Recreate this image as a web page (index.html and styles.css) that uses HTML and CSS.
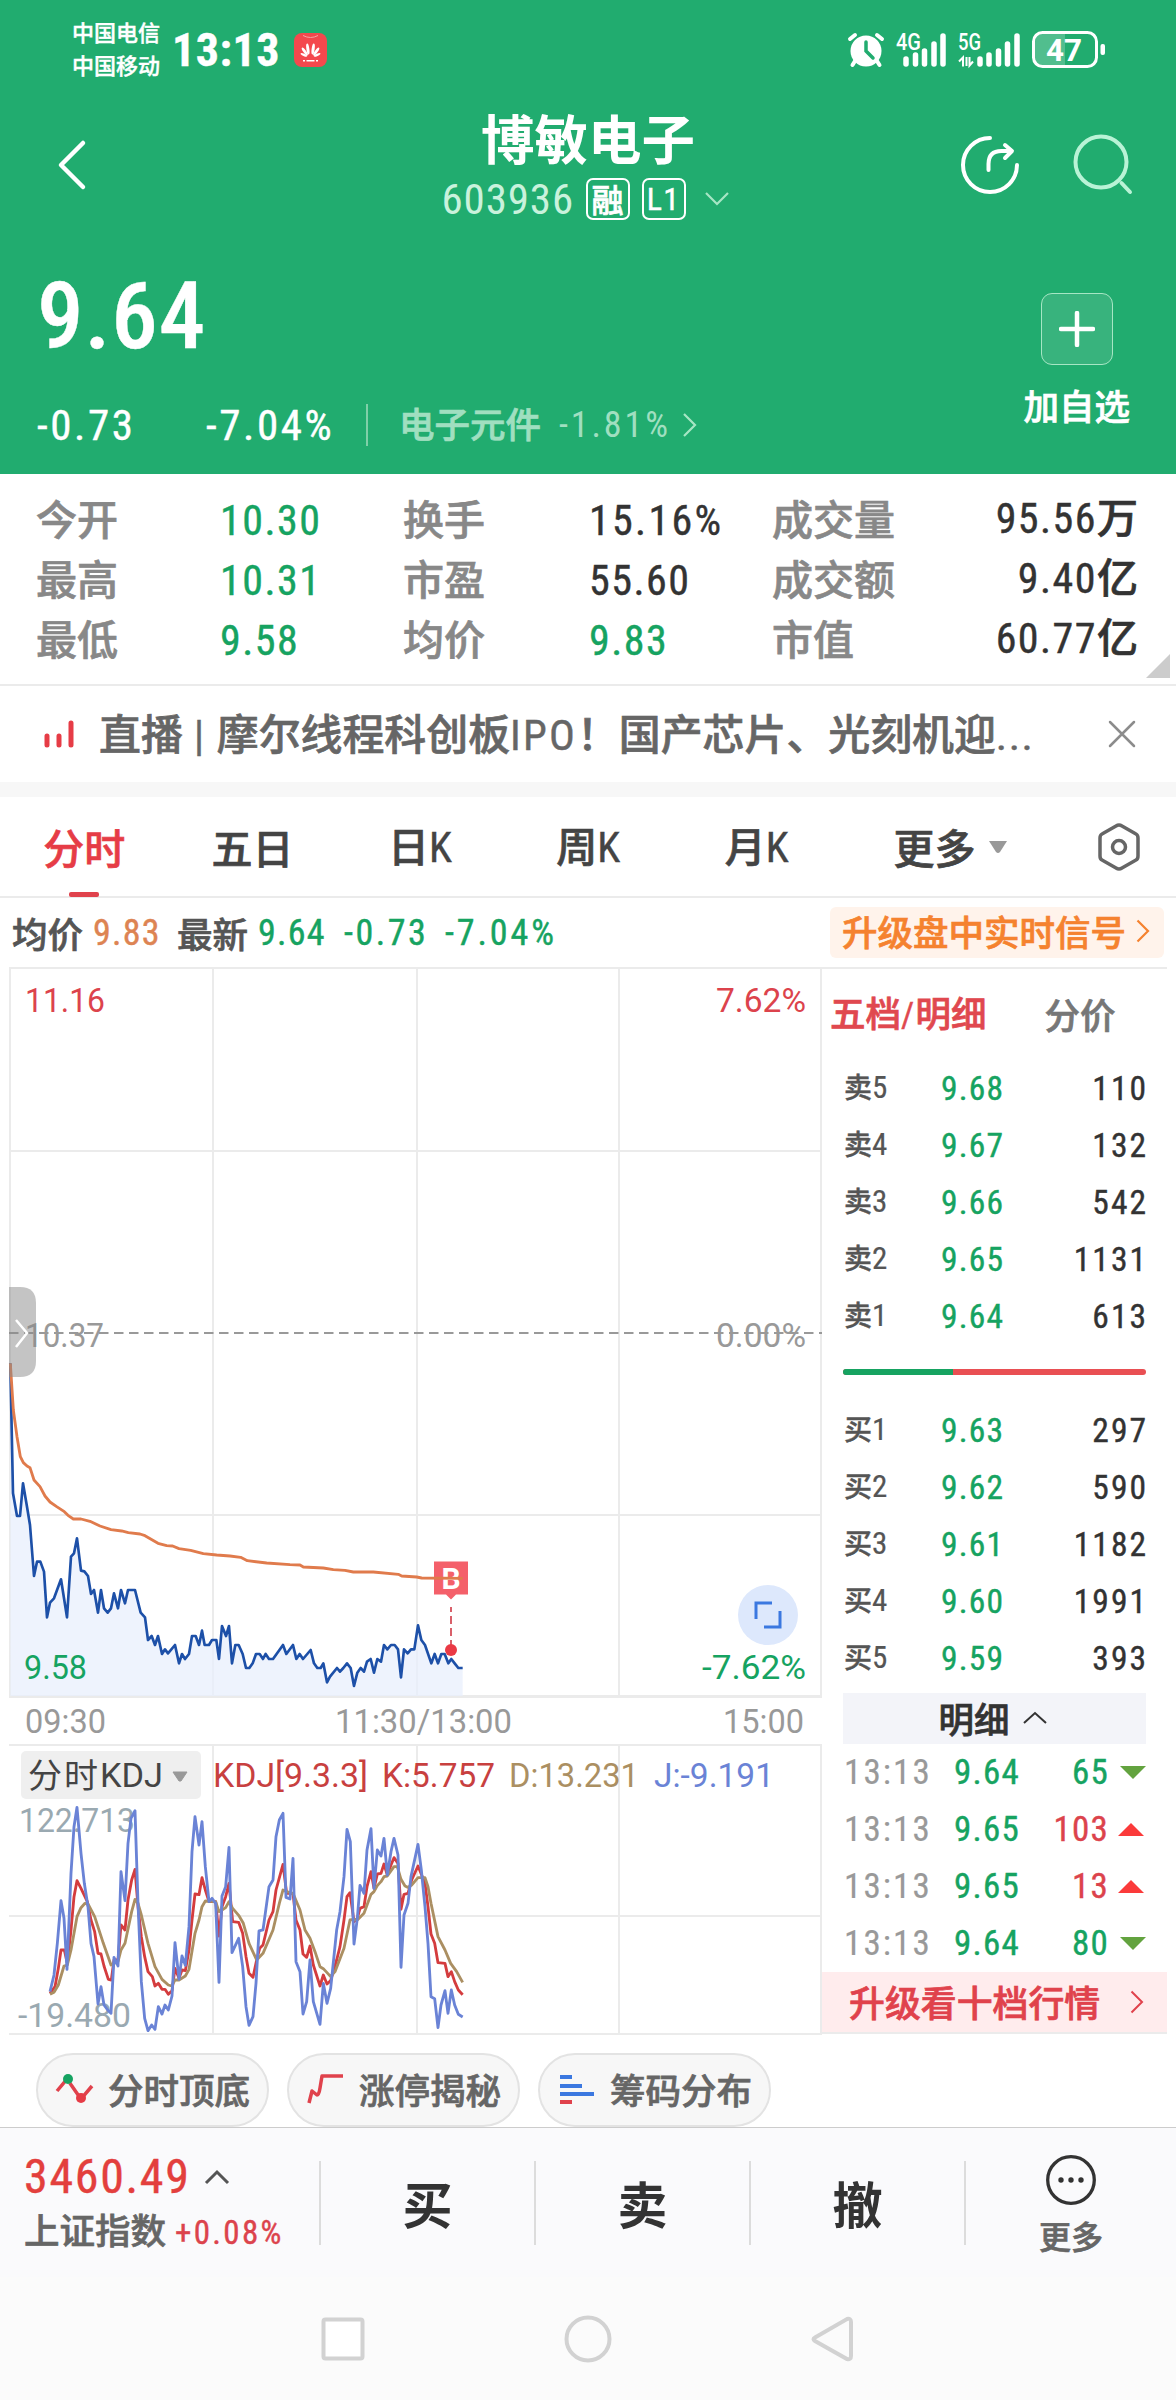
FILE: index.html
```html
<!DOCTYPE html>
<html lang="zh-CN">
<head>
    <meta charset="UTF-8">
    <meta name="viewport" content="width=device-width, initial-scale=1.0">
    <title>博敏电子 603936</title>
    <link rel="stylesheet" href="styles.css">
</head>
<body>
    <header class="quote-header">
        <div class="status-bar">
            <div class="carriers">
                <span>中国电信</span>
                <span>中国移动</span>
            </div>
            <span class="clock num">13:13</span>
            <svg class="app-icon" width="33" height="34" viewBox="0 0 33 34">
                <rect width="33" height="34" rx="8" fill="#f4484d"/>
                <path d="M9 2.500q7.500 4 15 0" fill="none" stroke="#f9a3a3"/>
                <g fill="#fff">
                    <ellipse cx="14.700" cy="16" rx="1.500" ry="5.500" transform="rotate(-8 14.500 22)"/>
                    <ellipse cx="18.300" cy="16" rx="1.500" ry="5.500" transform="rotate(8 18.500 22)"/>
                    <ellipse cx="14" cy="17.500" rx="1.400" ry="4.800" transform="rotate(-36 14 23)"/>
                    <ellipse cx="19" cy="17.500" rx="1.400" ry="4.800" transform="rotate(36 19 23)"/>
                    <ellipse cx="13.500" cy="19.500" rx="1.100" ry="3.600" transform="rotate(-66 13.500 23.500)"/>
                    <ellipse cx="19.500" cy="19.500" rx="1.100" ry="3.600" transform="rotate(66 19.500 23.500)"/>
                    <path d="M9 27h2v1.500H9zM12.500 27h8v1.500h-8zM22 27h2v1.500h-2z"/>
                </g>
            </svg>
            <svg class="status-icons" width="262" height="42" viewBox="846 29 262 42">
                <g stroke="#fff" stroke-width="4" stroke-linecap="round" fill="none">
                    <path d="M850 39l5-4M882 39l-5-4M855 61l-2.500 4M877 61l2.500 4"/>
                </g>
                <circle cx="866" cy="51" r="15.500" fill="#fff"/>
                <path d="M866 42v9l7 7" fill="none" stroke="#21ac6f" stroke-width="3.500" stroke-linecap="round"/>
                <text class="net" x="896" y="49.500" textLength="25" lengthAdjust="spacingAndGlyphs">4G</text>
                <text class="net" x="958" y="49.500" textLength="23" lengthAdjust="spacingAndGlyphs">5G</text>
                <g stroke="#fff" stroke-width="5.500" stroke-linecap="round">
                    <path d="M906 59v5M915.500 55v9M924.500 51v13M934 44v20M943 36v28"/>
                    <path d="M980 59v5M989 55v9M998.500 51v13M1007.500 44v20M1017 36v28"/>
                </g>
                <path d="M959 61.500l4-4v9M966.500 66v-9M969.500 57v8.500l3.500-4" fill="none" stroke="#fff" stroke-width="2"/>
                <path d="M1045 33h20v34h-20q-10 0-10-9V42q0-9 10-9z" fill="#fff" fill-opacity=".22"/>
                <rect x="1033.500" y="32.500" width="63" height="34" rx="9" fill="none" stroke="#fff" stroke-width="3"/>
                <rect x="1100.500" y="44" width="4.500" height="11" rx="2" fill="#fff"/>
                <text class="battery" x="1046" y="61" textLength="36" lengthAdjust="spacingAndGlyphs">47</text>
            </svg>
        </div>

        <div class="title-bar">
            <svg class="back" width="36" height="56" viewBox="0 0 36 56">
                <path d="M29 6L7 28l22 22" fill="none" stroke="#fff" stroke-width="4.500" stroke-linecap="round" stroke-linejoin="round"/>
            </svg>
            <div class="title">
                <h1>博敏电子</h1>
                <div class="code-row">
                    <span class="code num">603936</span>
                    <span class="badge">融</span>
                    <span class="badge num">L1</span>
                    <svg width="24" height="14" viewBox="0 0 24 14"><path d="M1 1l11 11L23 1" fill="none" stroke="#a6e6c4" stroke-width="2.200"/></svg>
                </div>
            </div>
            <div class="actions">
                <svg width="64" height="64" viewBox="958 133 64 64" fill="none" stroke="#fff" stroke-width="4" stroke-linecap="round" stroke-linejoin="round">
                    <path d="M990 138a27 27 0 1 0 27 27"/>
                    <path d="M988.500 170v-6q0-13 13-13h10M1005 145l7 6-7 7"/>
                </svg>
                <svg width="64" height="64" viewBox="1072 133 64 64" fill="none" stroke="#b9f3d6" stroke-width="4" stroke-linecap="round">
                    <circle cx="1101" cy="162" r="25.500"/>
                    <path d="M1121.500 183l8.500 9"/>
                </svg>
            </div>
        </div>

        <div class="price-block">
            <div>
                <div class="price num">9.64</div>
                <div class="change">
                    <span class="diff num">-0.73</span>
                    <span class="pct num">-7.04%</span>
                    <span class="sector">电子元件</span>
                    <span class="sector-pct num">-1.81%</span>
                    <svg width="16" height="26" viewBox="0 0 16 26"><path d="M2 2l11 11L2 24" fill="none" stroke="#a6e6c4" stroke-width="2.200"/></svg>
                </div>
            </div>
            <div class="add">
                <div class="add-box">
                    <svg width="36" height="36" viewBox="0 0 36 36"><path d="M18 2v32M2 18h32" stroke="#fff" stroke-width="4.500" stroke-linecap="round"/></svg>
                </div>
                <span>加自选</span>
            </div>
        </div>
    </header>

    <section class="stats">
        <span class="label">今开</span><span class="num green">10.30</span>
        <span class="label">换手</span><span class="num wide">15.16%</span>
        <span class="label">成交量</span><span class="right"><span class="num">95.56</span>万</span>
        <span class="label">最高</span><span class="num green">10.31</span>
        <span class="label">市盈</span><span class="num">55.60</span>
        <span class="label">成交额</span><span class="right"><span class="num">9.40</span>亿</span>
        <span class="label">最低</span><span class="num green">9.58</span>
        <span class="label">均价</span><span class="num green">9.83</span>
        <span class="label">市值</span><span class="right"><span class="num">60.77</span>亿</span>
        <i class="corner"></i>
    </section>

    <section class="news">
        <svg width="32" height="28" viewBox="0 0 32 28"><path d="M3 16v9M15 16v9M27 3v22" stroke="#e63c46" stroke-width="5" stroke-linecap="round"/></svg>
        <p>直播<span class="num bar">|</span>摩尔线程科创板<span class="num ipo">IPO</span>！国产芯片、光刻机迎<span class="num">...</span></p>
        <svg width="28" height="28" viewBox="0 0 28 28"><path d="M2 2l24 24M26 2L2 26" stroke="#8c8c8c" stroke-width="2.500" stroke-linecap="round"/></svg>
    </section>

    <nav class="tabs">
        <span class="tab active">分时</span>
        <span class="tab">五日</span>
        <span class="tab">日<b class="num">K</b></span>
        <span class="tab">周<b class="num">K</b></span>
        <span class="tab">月<b class="num">K</b></span>
        <span class="tab more">更多 <svg width="22" height="14" viewBox="0 0 22 14"><path d="M2 1h18l-7 11q-2 2-4 0z" fill="#999"/></svg></span>
        <svg class="gear" width="44" height="50" viewBox="0 0 44 50" fill="none" stroke="#666" stroke-width="3.500">
            <path d="M19 4q3-2 6 0l14 8q2 1 2 4v18q0 3-2 4l-14 8q-3 2-6 0L5 38q-2-1-2-4V16q0-3 2-4z"/>
            <circle cx="22" cy="25" r="6.500"/>
        </svg>
    </nav>

    <section class="summary">
        <span>均价</span><span class="num orange">9.83</span>
        <span class="latest">最新</span><span class="num green">9.64</span>
        <span class="num green s-diff">-0.73</span><span class="num green s-pct">-7.04%</span>
        <a class="signal">升级盘中实时信号 <svg width="14" height="24" viewBox="0 0 14 24"><path d="M1.500 1.500L12 12 1.500 22.500" fill="none" stroke="#f5822f" stroke-width="2.200"/></svg></a>
    </section>

    <main class="board">
        <div class="charts">
            <svg class="price-chart" width="822" height="777" viewBox="0 967 822 777">
                <g stroke="#ebebeb" stroke-width="2">
                    <path d="M10 968v729M213 968v729M417 968v729M619 968v729M821 968v729M9 1151h813M9 1515h813"/>
                    <path d="M9 1696.500h813" stroke-width="3"/>
                </g>
                <path d="M9 1333h813" stroke="#999" stroke-width="2" stroke-dasharray="9.500 5.500"/>
                <g transform="translate(0 1280) scale(.33333)" fill="none" stroke-linejoin="round">
                    <path class="area" d="M31 250L39 640 51 708 60 708 69 610 81 680 90 735 102 888 111 845 121 845 132 875 141 1012 150 968 162 955 183 898 201 1012 213 830 222 820 231 775 243 872 253 874 264 888 273 942 282 930 294 998 303 930 312 985 323 998 333 985 342 940 354 985 363 930 375 970 384 930 405 930 422 998 435 1012 444 1080 455 1068 465 1095 474 1068 486 1122 495 1108 504 1120 525 1095 537 1150 546 1122 555 1137 567 1122 576 1068 587 1068 597 1095 606 1052 614 1095 636 1080 649 1080 657 1137 666 1038 678 1068 687 1038 696 1150 706 1095 716 1095 728 1122 738 1164 748 1164 758 1150 768 1122 779 1122 789 1137 797 1122 807 1137 819 1137 849 1095 859 1122 879 1095 889 1137 899 1122 909 1137 932 1110 942 1150 952 1164 962 1164 970 1150 981 1207 1011 1164 1020 1175 1041 1150 1052 1164 1062 1218 1072 1178 1082 1164 1092 1175 1101 1145 1112 1137 1122 1178 1132 1137 1143 1145 1152 1095 1162 1108 1173 1095 1184 1095 1194 1108 1203 1192 1212 1108 1223 1120 1233 1108 1243 1108 1254 1036 1264 1080 1275 1095 1294 1150 1304 1122 1314 1150 1324 1122 1334 1122 1345 1150 1354 1137 1364 1150 1375 1164 1388 1164V1248H31z"/>
                    <polyline stroke="#1d50a8" stroke-width="8" points="31,250 39,640 51,708 60,708 69,610 81,680 90,735 102,888 111,845 121,845 132,875 141,1012 150,968 162,955 183,898 201,1012 213,830 222,820 231,775 243,872 253,874 264,888 273,942 282,930 294,998 303,930 312,985 323,998 333,985 342,940 354,985 363,930 375,970 384,930 405,930 422,998 435,1012 444,1080 455,1068 465,1095 474,1068 486,1122 495,1108 504,1120 525,1095 537,1150 546,1122 555,1137 567,1122 576,1068 587,1068 597,1095 606,1052 614,1095 627,1095 636,1080 649,1080 657,1137 666,1038 678,1068 687,1038 696,1150 706,1095 716,1095 728,1122 738,1164 748,1164 758,1150 768,1122 779,1122 789,1137 797,1122 807,1137 819,1137 849,1095 859,1122 879,1095 889,1137 899,1122 909,1137 932,1110 942,1150 952,1164 962,1164 970,1150 981,1207 990,1190 1011,1164 1020,1175 1030,1164 1041,1150 1052,1164 1062,1218 1072,1178 1082,1164 1092,1175 1101,1145 1112,1137 1122,1178 1132,1137 1143,1145 1152,1095 1162,1108 1173,1095 1184,1095 1194,1108 1203,1192 1212,1108 1223,1120 1233,1108 1243,1108 1254,1036 1264,1080 1275,1095 1294,1150 1304,1122 1314,1150 1324,1122 1334,1122 1345,1150 1354,1137 1364,1150 1375,1164 1388,1164"/>
                </g>
                <!-- buy marker -->
                <path d="M434 1561.500h34v33h-12l-5 5-5-5h-12z" fill="#f4606a"/>
                <text class="marker" x="451" y="1589">B</text>
                <path d="M451 1607v38" stroke="#d9606a" stroke-width="2" stroke-dasharray="5 4 8 4 8 4"/>
                <circle cx="451" cy="1650" r="6" fill="#ea3a45"/>
                <g transform="translate(0 1280) scale(.33333)" fill="none" stroke-linejoin="round">
                    <polyline stroke="#e07b4c" stroke-width="8.500" points="31,250 40,390 51,470 61,530 70,548 81,558 90,563 102,600 120,620 135,648 150,666 170,680 193,695 204,706 220,717 243,717 270,724 300,738 333,749 365,753 385,758 420,762 435,767 474,790 500,797 518,798 537,806 572,811 610,821 650,825 690,828 722,832 742,842 800,849 870,854 900,855 910,861 970,864 1000,869 1035,871 1060,876 1120,876 1195,883 1205,888 1250,891 1265,894 1388,895"/>
                </g>
                <circle cx="768" cy="1615" r="30" fill="#dde8fc"/>
                <path d="M756 1619v-16h16M764 1627h16v-16" fill="none" stroke="#3b78e0" stroke-width="3"/>
                <g class="axis">
                    <text class="up" x="25" y="1012" textLength="80" lengthAdjust="spacingAndGlyphs">11.16</text>
                    <text class="up" x="716" y="1012" textLength="90" lengthAdjust="spacingAndGlyphs">7.62%</text>
                    <text x="25" y="1347" textLength="79" lengthAdjust="spacingAndGlyphs">10.37</text>
                    <text x="716" y="1347" textLength="90" lengthAdjust="spacingAndGlyphs">0.00%</text>
                    <text class="down" x="24" y="1679" textLength="63" lengthAdjust="spacingAndGlyphs">9.58</text>
                    <text class="down" x="702" y="1679" textLength="104" lengthAdjust="spacingAndGlyphs">-7.62%</text>
                    <text x="25" y="1733" textLength="81" lengthAdjust="spacingAndGlyphs">09:30</text>
                    <text x="335" y="1733" textLength="177" lengthAdjust="spacingAndGlyphs">11:30/13:00</text>
                    <text x="723" y="1733" textLength="81" lengthAdjust="spacingAndGlyphs">15:00</text>
                </g>
                <path d="M9 1287h11q16 0 16 16v58q0 16-16 16H9z" fill="#8a8a8a" fill-opacity=".5"/>
                <path d="M16 1320l11 13-11 14" fill="none" stroke="#fff" stroke-width="2.500"/>
            </svg>

            <svg class="kdj-chart" width="822" height="292" viewBox="0 1744 822 292">
                <g stroke="#ebebeb" stroke-width="2">
                    <path d="M9 1745h813M9 1916h813M9 2034h813M213 1744v290M417 1744v290M619 1744v290M821 1744v290"/>
                </g>
                <rect x="21" y="1751" width="180" height="48" rx="5" fill="#efefef"/>
                <text class="kdj-name" x="28" y="1788"><tspan textLength="70">分时</tspan><tspan class="latin" y="1787" x="100" textLength="63" lengthAdjust="spacingAndGlyphs">KDJ</tspan></text>
                <path d="M173 1772h14l-6 9h-2z" fill="#999" stroke="#999" stroke-linejoin="round"/>
                <g class="axis">
                    <text class="k" x="213" y="1787" textLength="155" lengthAdjust="spacingAndGlyphs">KDJ[9.3.3]</text>
                    <text class="k" x="382" y="1787" textLength="113" lengthAdjust="spacingAndGlyphs">K:5.757</text>
                    <text class="d" x="509" y="1787" textLength="130" lengthAdjust="spacingAndGlyphs">D:13.231</text>
                    <text class="j" x="654" y="1787" textLength="120" lengthAdjust="spacingAndGlyphs">J:-9.191</text>
                    <text class="range" x="19" y="1832" textLength="116" lengthAdjust="spacingAndGlyphs">122.713</text>
                    <text class="range" x="18" y="2027" textLength="113" lengthAdjust="spacingAndGlyphs">-19.480</text>
                </g>
                <g transform="translate(0 1730) scale(.33333)" fill="none" stroke-width="8.500" stroke-linejoin="round">
                    <polyline stroke="#d43c3e" points="150,790 165,770 175,715 183,660 193,660 202,700 213,600 222,500 231,452 243,475 262,515 273,570 284,605 294,670 303,672 312,708 325,748 334,750 342,690 354,690 363,585 375,600 384,510 395,450 405,418 414,530 424,620 434,680 444,725 457,740 465,768 475,760 486,778 495,778 505,793 516,782 525,715 537,745 546,720 556,722 567,660 576,570 585,492 597,494 606,443 616,480 627,515 647,515 657,618 666,530 677,500 687,460 698,575 716,577 728,610 738,680 747,730 759,742 770,690 779,655 789,645 807,570 819,545 828,480 849,403 860,490 879,490 888,570 900,600 909,672 920,682 930,648 940,705 960,768 970,735 981,762 992,752 1010,690 1020,650 1032,570 1041,500 1050,488 1062,575 1072,565 1080,535 1092,530 1101,470 1113,425 1122,475 1132,432 1143,430 1152,402 1162,435 1173,405 1182,383 1194,400 1203,538 1212,493 1224,490 1235,450 1254,408 1275,460 1284,530 1293,612 1304,640 1314,698 1335,700 1344,740 1354,725 1364,755 1375,780 1388,794"/>
                    <polyline stroke="#ab8f62" points="150,793 162,787 175,765 192,708 202,705 213,660 231,560 243,533 255,520 264,522 284,560 310,640 333,705 342,700 354,695 363,660 375,640 395,545 405,508 414,520 424,555 444,640 465,710 486,748 505,765 515,768 525,750 537,750 556,738 567,718 585,610 597,570 606,530 616,513 647,515 657,545 666,540 677,533 687,515 698,535 716,556 730,580 747,640 770,690 789,670 819,600 838,520 849,480 860,485 879,490 900,540 915,600 930,625 945,665 960,710 970,716 992,740 1005,725 1032,655 1050,570 1060,568 1072,570 1092,550 1113,493 1122,485 1132,467 1143,455 1152,440 1162,438 1182,410 1192,410 1203,448 1215,468 1224,472 1235,465 1254,443 1275,443 1284,470 1293,520 1314,620 1335,660 1352,700 1370,725 1388,757"/>
                    <polyline stroke="#6a83d6" points="150,785 162,735 172,640 183,512 192,565 201,718 213,430 222,290 231,232 243,370 253,460 264,530 273,640 282,680 294,822 303,770 312,825 323,840 333,850 342,682 354,708 363,425 375,512 384,340 393,265 405,242 414,520 424,755 434,865 444,902 455,885 465,898 475,830 486,852 495,825 505,840 516,798 525,638 537,748 546,678 556,706 567,590 576,365 585,260 597,345 606,275 616,410 627,515 636,505 647,520 657,757 666,498 677,470 687,352 696,668 716,625 728,710 738,830 747,886 759,860 768,760 777,603 789,600 807,470 819,450 828,320 838,270 849,250 858,502 870,507 879,385 888,695 900,725 909,852 920,815 930,690 940,815 960,883 970,760 981,820 992,775 1010,600 1020,545 1032,440 1041,298 1051,335 1062,642 1072,565 1080,466 1092,490 1101,360 1113,296 1122,475 1132,360 1143,378 1152,325 1162,435 1173,365 1182,325 1194,375 1203,712 1212,555 1224,520 1233,440 1254,343 1264,420 1275,530 1284,640 1293,800 1304,806 1314,893 1323,825 1335,782 1344,850 1354,780 1364,825 1375,853 1388,861"/>
                </g>
            </svg>
        </div>

        <aside class="book">
            <div class="book-tabs"><span class="active">五档<span class="num">/</span>明细</span><span>分价</span></div>
            <div class="depth">
                <div class="row"><span class="side">卖<i class="num">5</i></span><span class="num green">9.68</span><span class="num qty">110</span></div>
                <div class="row"><span class="side">卖<i class="num">4</i></span><span class="num green">9.67</span><span class="num qty">132</span></div>
                <div class="row"><span class="side">卖<i class="num">3</i></span><span class="num green">9.66</span><span class="num qty">542</span></div>
                <div class="row"><span class="side">卖<i class="num">2</i></span><span class="num green">9.65</span><span class="num qty">1131</span></div>
                <div class="row"><span class="side">卖<i class="num">1</i></span><span class="num green">9.64</span><span class="num qty">613</span></div>
                <div class="ratio"><i style="width: 36.300%"></i></div>
                <div class="row"><span class="side">买<i class="num">1</i></span><span class="num green">9.63</span><span class="num qty">297</span></div>
                <div class="row"><span class="side">买<i class="num">2</i></span><span class="num green">9.62</span><span class="num qty">590</span></div>
                <div class="row"><span class="side">买<i class="num">3</i></span><span class="num green">9.61</span><span class="num qty">1182</span></div>
                <div class="row"><span class="side">买<i class="num">4</i></span><span class="num green">9.60</span><span class="num qty">1991</span></div>
                <div class="row"><span class="side">买<i class="num">5</i></span><span class="num green">9.59</span><span class="num qty">393</span></div>
            </div>
            <div class="detail-head">明细 <svg width="24" height="13" viewBox="0 0 24 13"><path d="M1 12L12 2l11 10" fill="none" stroke="#333" stroke-width="2"/></svg></div>
            <div class="ticks">
                <div class="tick"><span class="num time">13:13</span><span class="num green">9.64</span><span class="num vol green">65</span><i class="down-mark"></i></div>
                <div class="tick"><span class="num time">13:13</span><span class="num green">9.65</span><span class="num vol red">103</span><i class="up-mark"></i></div>
                <div class="tick"><span class="num time">13:13</span><span class="num green">9.65</span><span class="num vol red">13</span><i class="up-mark"></i></div>
                <div class="tick"><span class="num time">13:13</span><span class="num green">9.64</span><span class="num vol green">80</span><i class="down-mark"></i></div>
            </div>
            <a class="level2">升级看十档行情 <svg width="14" height="24" viewBox="0 0 14 24"><path d="M1.500 1.500L12 12 1.500 22.500" fill="none" stroke="#e0424c" stroke-width="2"/></svg></a>
        </aside>
    </main>

    <section class="tools">
        <div class="tool">
            <svg width="40" height="32" viewBox="0 0 40 32"><path d="M2 18L12 6l14 20 11-13" fill="none" stroke="#e0424c" stroke-width="3.500" stroke-dasharray="15.500 5 17 5 20"/><circle cx="13" cy="6" r="5" fill="#16a361"/><circle cx="26" cy="25" r="5" fill="#e63c46"/></svg>
            <span>分时顶底</span>
        </div>
        <div class="tool">
            <svg width="40" height="32" viewBox="0 0 40 32"><path d="M3 30l3-12 5 4q2 0 3-7l2-12h21" fill="none" stroke="#e0424c" stroke-width="3.500" stroke-linejoin="round"/></svg>
            <span>涨停揭秘</span>
        </div>
        <div class="tool">
            <svg width="40" height="32" viewBox="0 0 40 32"><path d="M3 4h12M3 13h22M3 21h34" stroke="#3b78e0" stroke-width="4"/><path d="M3 29h12" stroke="#e0424c" stroke-width="4"/></svg>
            <span>筹码分布</span>
        </div>
    </section>

    <footer class="toolbar">
        <div class="index">
            <div class="index-top"><span class="num">3460.49</span><svg width="26" height="16" viewBox="0 0 26 16"><path d="M2 14L13 3l11 11" fill="none" stroke="#555" stroke-width="3"/></svg></div>
            <div class="index-bottom">上证指数<span class="num">+0.08%</span></div>
        </div>
        <div class="trade">买</div>
        <div class="trade">卖</div>
        <div class="trade">撤</div>
        <div class="more-btn">
            <svg width="52" height="52" viewBox="0 0 52 52"><circle cx="26" cy="26" r="23.300" fill="none" stroke="#333" stroke-width="3.300"/><g fill="#333"><circle cx="16" cy="26" r="2.700"/><circle cx="26" cy="26" r="2.700"/><circle cx="36" cy="26" r="2.700"/></g></svg>
            <span>更多</span>
        </div>
    </footer>

    <div class="system-nav">
        <svg width="52" height="52" viewBox="0 0 52 52"><rect x="6.500" y="6.500" width="39" height="39" rx="2" fill="#fff"/></svg>
        <svg width="52" height="52" viewBox="0 0 52 52"><circle cx="26" cy="26" r="21.500"/></svg>
        <svg width="52" height="52" viewBox="0 0 52 52"><path d="M8 24.500L40 6q4-1 4 3v34q0 4-4 3L8 28q-3-2 0-3.500z"/></svg>
    </div>
</body>
</html>
```

FILE: styles.css
```css
* {
    box-sizing: border-box;
}

body {
    margin: 0;
    width: 1176px;
    height: 2400px;
    overflow: hidden;
    background: #fff;
    color: #333;
    font-family: "Noto Sans CJK SC", sans-serif;
    font-weight: 500;
    line-height: 1;
    white-space: nowrap;
    -webkit-text-stroke: .7px;
}

svg {
    display: block;
    flex: none;
    -webkit-text-stroke: 0;
}

i {
    font-style: normal;
}

.num {
    font-family: Roboto, "Noto Sans CJK SC", sans-serif;
    font-stretch: 87%;
    font-weight: 400;
    letter-spacing: .035em;
    -webkit-text-stroke: .4px;
}

.green { color: #16a361; }
.red { color: #dc434c; }
.orange { color: #dd8453; }

/* header */
.quote-header {
    height: 474px;
    background: #21ac6f;
    color: #fff;
}

.status-bar {
    display: flex;
    align-items: center;
    height: 100px;
    padding: 0 68px 0 72px;
}

.carriers {
    display: flex;
    flex-direction: column;
    gap: 11px;
    margin-bottom: 5px;
    font-size: 22px;
    -webkit-text-stroke: .4px;
}

.clock {
    margin-left: 12px;
    width: 109px;
    font-size: 46px;
    font-weight: 700;
    letter-spacing: .01em;
}

.app-icon {
    margin-left: 13px;
}

.status-icons {
    margin-left: auto;
}

.net {
    font: 500 23px Roboto, sans-serif;
    fill: #fff;
}

.battery {
    font: 700 31px Roboto, sans-serif;
    fill: #fff;
}

.title-bar {
    display: flex;
    position: relative;
    height: 130px;
    padding: 0 40px 0 54px;
    justify-content: space-between;
    align-items: center;
}

.title {
    position: absolute;
    left: 0;
    width: 1176px;
    top: 10px;
    display: flex;
    flex-direction: column;
    align-items: center;
}

h1 {
    margin: 0;
    font-size: 53.500px;
    font-weight: 700;
    -webkit-text-stroke: 0;
}

.code-row {
    display: flex;
    align-items: center;
    gap: 12px;
    margin-top: 14px;
    padding-right: 6px;
}

.code {
    width: 132px;
    font-size: 43px;
    letter-spacing: .02em;
    color: #c9f2dc;
    -webkit-text-stroke: 0;
}

.badge {
    width: 44px;
    height: 42px;
    border: 2px solid #fff;
    border-radius: 7px;
    font-size: 32px;
    line-height: 36px;
    text-align: center;
}

.badge.num {
    line-height: 39px;
}

.code-row svg {
    margin-left: 7px;
}

.actions {
    display: flex;
    gap: 50px;
}

.price-block {
    display: flex;
    justify-content: space-between;
    padding: 40px 46px 0 37px;
}

.price {
    font-size: 93px;
    font-weight: 500;
    letter-spacing: .01em;
}

.change {
    display: flex;
    align-items: center;
    height: 42px;
    margin-top: 41px;
    font-size: 43px;
}

.diff {
    width: 169px;
    letter-spacing: .06em;
}

.pct {
    width: 162px;
    height: 42px;
    border-right: 2px solid #7fd0a8;
    letter-spacing: .06em;
}

.sector {
    margin-left: 31px;
    margin-bottom: 4px;
    font-size: 35.500px;
    color: #a0dfc0;
}

.sector-pct {
    width: 123px;
    margin-left: 18px;
    font-size: 36px;
    letter-spacing: .08em;
    color: #a0dfc0;
    -webkit-text-stroke: 0;
}

.add {
    display: flex;
    flex-direction: column;
    align-items: center;
    padding-top: 23px;
    font-size: 35.500px;
}

.add-box {
    display: flex;
    align-items: center;
    justify-content: center;
    width: 72px;
    height: 72px;
    margin-bottom: 22px;
    border: 1px solid #a6e6c4;
    border-radius: 11px;
    background: #38b37d;
}

/* key figures */
.stats {
    position: relative;
    display: grid;
    grid-template-columns: 184px 183px 186px 183px 150px 216px;
    grid-auto-rows: 60px;
    align-items: center;
    height: 212px;
    padding: 15px 37px 0 36px;
    border-bottom: 2px solid #ebebeb;
    font-size: 41px;
}

.stats .num {
    padding-top: 3px;
    font-size: 42px;
}

.stats .wide {
    letter-spacing: .055em;
}

.stats .label,
.right {
    padding-bottom: 4px;
}

.stats .label {
    color: #888;
}

.right {
    text-align: right;
}

.corner {
    position: absolute;
    right: 6px;
    bottom: 6px;
    border: 12px solid;
    border-color: transparent #ccc #ccc transparent;
}

/* news line */
.news {
    display: flex;
    align-items: center;
    height: 96px;
    padding: 0 40px 0 44px;
    color: #666;
    font-size: 41.900px;
}

.news p {
    flex: 1;
    margin: 0 0 0 23px;
}

.news .num {
    font-size: 43px;
}

.bar {
    margin: 0 11px;
}

.news .ipo {
    letter-spacing: .05em;
}

/* period tabs */
.tabs {
    display: flex;
    align-items: center;
    height: 116px;
    border-top: 15px solid #f7f7f7;
    border-bottom: 2px solid #ebebeb;
    padding: 0 35px 0 0;
    font-size: 41px;
    color: #444;
}

.tab {
    position: relative;
    width: 168.300px;
    text-align: center;
}

.tab .num {
    font-size: 42px;
}

.tab.active {
    color: #e63c46;
}

.tab.active::after {
    content: "";
    position: absolute;
    left: 69px;
    bottom: -30px;
    width: 30px;
    height: 5px;
    border-radius: 2px;
    background: #e0424c;
}

.tab.more {
    display: flex;
    gap: 12px;
    align-items: center;
    justify-content: center;
    width: 220px;
}

.gear {
    margin-left: auto;
}

/* price summary */
.summary {
    display: flex;
    align-items: center;
    height: 71px;
    margin: 0 9px;
    padding-left: 3px;
    border-bottom: 2px solid #ebebeb;
    color: #555;
    font-size: 35.500px;
}

.summary .num {
    width: 68px;
    margin-left: 10px;
    font-size: 36px;
}

.latest {
    margin-left: 16px;
}

.summary .s-diff {
    width: 83px;
    margin-left: 18px;
    letter-spacing: .07em;
}

.summary .s-pct {
    width: 112px;
    margin-left: 18px;
    letter-spacing: .08em;
}

.signal {
    display: flex;
    align-items: center;
    gap: 10px;
    height: 51px;
    margin-left: auto;
    margin-right: 3px;
    padding: 0 14px 3px 12px;
    border-radius: 6px;
    background: #fff3eb;
    color: #f5822f;
}

/* charts and order book */
.board {
    display: flex;
    margin-top: -2px;
}

.charts {
    width: 822px;
}

.area {
    fill: #e8effc;
    fill-opacity: .75;
}

.axis text {
    font: 450 33px Roboto, sans-serif;
    fill: #999;
}

.axis .up { fill: #dc434c; }
.axis .down { fill: #16a361; }
.axis .k { fill: #c8403f; }
.axis .d { fill: #ab8f62; }
.axis .j { fill: #6a83d6; }
.axis .range { fill: #9aa9b1; }

.marker {
    font: 700 30px Roboto, sans-serif;
    fill: #fff;
    text-anchor: middle;
}

.kdj-name {
    font-size: 34px;
    font-weight: 400;
    fill: #444;
}

.latin {
    font-family: Roboto, sans-serif;
}

.book {
    width: 354px;
}

.book-tabs {
    display: flex;
    gap: 58px;
    align-items: center;
    height: 93px;
    padding-left: 8px;
    font-size: 35.500px;
    color: #777;
}

.book-tabs .active {
    color: #e0484f;
}

.depth {
    padding: 0 30px 0 22px;
}

.row {
    display: grid;
    grid-template-columns: 97px 63px 1fr;
    align-items: center;
    height: 57px;
    font-size: 33.500px;
}

.side {
    padding-bottom: 2px;
    font-size: 28px;
    color: #555;
    -webkit-text-stroke: .4px;
}

.side .num {
    font-size: 31px;
    -webkit-text-stroke: .2px;
}

.qty {
    letter-spacing: .06em;
    margin-right: -2px;
    text-align: right;
}

.ratio {
    height: 6px;
    margin: 24px 0 27px -1px;
    border-radius: 3px;
    background: #e94f53;
    overflow: hidden;
}

.ratio i {
    display: block;
    height: 6px;
    background: #16a361;
}

.detail-head {
    display: flex;
    align-items: center;
    justify-content: center;
    gap: 13px;
    height: 51px;
    margin: 6px 30px 0 21px;
    padding: 0 4px 2px 0;
    background: #f3f4f9;
    font-size: 35.500px;
}

.ticks {
    padding: 0 30px 0 22px;
}

.tick {
    display: grid;
    grid-template-columns: 110px 80px 75px 1fr;
    align-items: center;
    height: 57px;
    font-size: 35px;
}

.time {
    color: #999;
    letter-spacing: .06em;
    -webkit-text-stroke: .2px;
}

.vol {
    text-align: right;
}

.up-mark,
.down-mark {
    justify-self: end;
    width: 26px;
    height: 13px;
    background: #63a33f;
    clip-path: polygon(0 0, 100% 0, 50% 100%);
}

.up-mark {
    margin-right: 2px;
    background: #fb3a3a;
    clip-path: polygon(50% 0, 100% 100%, 0 100%);
}

.level2 {
    display: flex;
    align-items: center;
    justify-content: space-between;
    height: 62px;
    margin-right: 9px;
    padding: 0 23px 0 27px;
    border-bottom: 2px solid #ebebeb;
    background: #ffeced;
    color: #e0424c;
    font-size: 35.900px;
}

/* quick tools */
.tools {
    display: flex;
    gap: 18px;
    height: 92px;
    padding: 17px 36px 0;
    border-bottom: 1px solid #ccc;
}

.tool {
    display: flex;
    align-items: center;
    gap: 13px;
    width: 233px;
    height: 74px;
    padding: 0 0 2px 17px;
    border: 2px solid #e3e3e3;
    border-radius: 37px;
    background: #f7f7f7;
    color: #666;
    font-size: 35.500px;
}

/* bottom toolbar */
.toolbar {
    display: flex;
    align-items: center;
    height: 149px;
    background: #fafafc;
}

.index {
    width: 319px;
    padding-left: 24px;
}

.index-top {
    display: flex;
    align-items: center;
    gap: 13px;
    font-size: 48px;
    color: #e33f3d;
}

.index-top .num {
    width: 167px;
}

.index-bottom {
    margin: 10px 0 4px;
    font-size: 35.500px;
    color: #666;
}

.index-bottom .num {
    margin-left: 9px;
    font-size: 33px;
    letter-spacing: .07em;
    color: #dc434c;
}

.trade {
    width: 215px;
    height: 84px;
    border-left: 2px solid #dcdcdc;
    font-size: 50px;
    font-weight: 700;
    line-height: 82px;
    text-align: center;
    -webkit-text-stroke: 0;
}

.more-btn {
    display: flex;
    flex-direction: column;
    align-items: center;
    justify-content: center;
    flex: 1;
    height: 84px;
    border-left: 2px solid #dcdcdc;
    font-size: 32px;
    color: #666;
    gap: 13px;
}

/* system navigation */
.system-nav {
    display: flex;
    justify-content: center;
    gap: 193px;
    height: 123px;
    padding-top: 36px;
    background: #fbfbfb;
    fill: none;
    stroke: #d2d2d2;
    stroke-width: 4;
}
```
